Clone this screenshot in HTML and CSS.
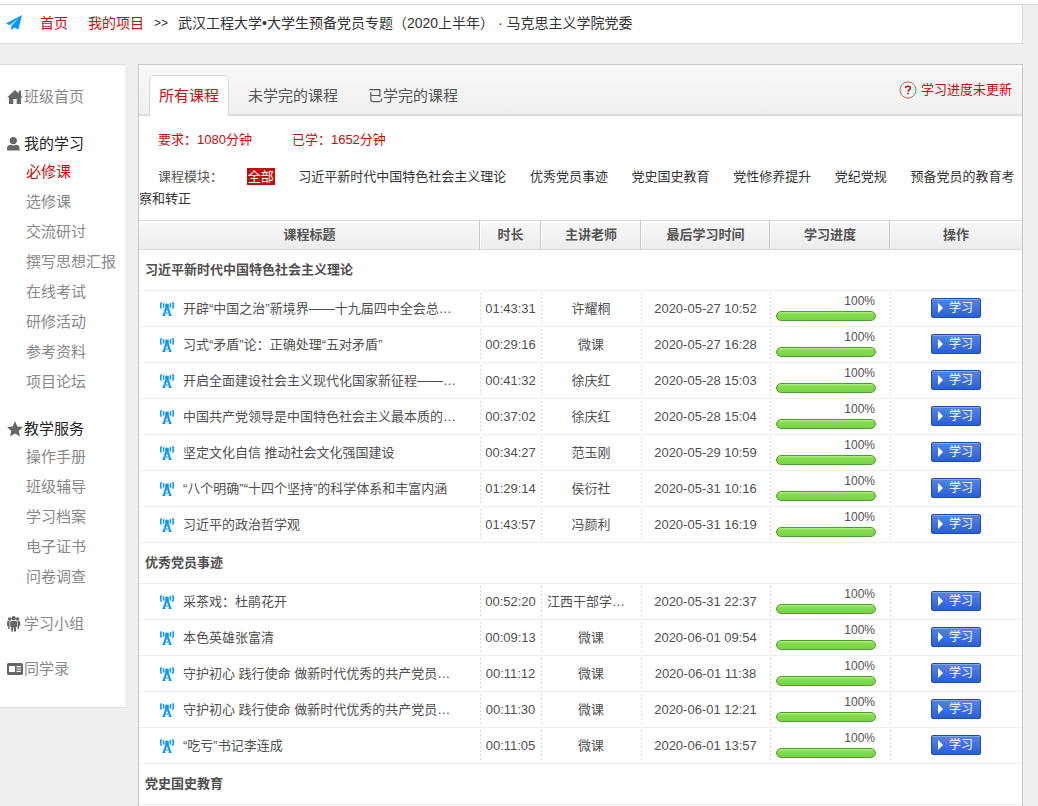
FILE: index.html
```html
<!DOCTYPE html>
<html lang="zh-CN">
<head>
    <meta charset="UTF-8">
    <meta name="viewport" content="width=device-width, initial-scale=1.0">
    <title>必修课</title>
    <link rel="stylesheet" href="styles.css">
</head>
<body>
    <svg class="sprite" aria-hidden="true">
        <symbol id="icon-tower" viewBox="0 0 14 14">
            <g fill="none" stroke="currentColor">
                <path d="M1.5 .3Q-.3 3.4 1.5 6.7M12.5 .3Q14.3 3.4 12.5 6.7" stroke-width="1.6"/>
                <path d="M4 1.2Q2.8 3.4 4 5.7M10 1.2Q11.2 3.4 10 5.7" stroke-width="1.5"/>
                <path d="M6.4 5L3.6 13.8M7.6 5L10.4 13.8" stroke-width="1.9"/>
                <path d="M5.4 8H8.6M4.4 11H9.6" stroke-width="1.2"/>
                <path d="M2.4 13.4H5.4M8.6 13.4H11.6" stroke-width="1.2"/>
            </g>
            <circle cx="7" cy="3.5" r="2" fill="currentColor"/>
        </symbol>
    </svg>

    <div class="top-line"></div>
    <div class="breadcrumb">
        <svg class="plane" viewBox="0 0 16 16" aria-hidden="true">
            <path d="M16 0L0 8.4L3.8 10.2L13 2.8L5.2 11V15.6L8 12.4L12.4 14.4Z" fill="#0a96ff"/>
        </svg>
        <a href="#">首页</a>
        <a href="#">我的项目</a>
        <span class="arrow">&gt;&gt;</span>
        <span>武汉工程大学•大学生预备党员专题（2020上半年） · 马克思主义学院党委</span>
    </div>

    <div class="layout">
        <nav class="sidebar">
            <div class="menu-section menu-home">
                <a class="menu-title" href="#">
                    <svg viewBox="0 0 16 16" aria-hidden="true"><path d="M8 1L0 8.6H2V15H6.3V10H9.7V15H14V8.6H16L14 6.7V1.5H11.8V4.6Z"/></svg>班级首页</a>
            </div>
            <div class="menu-section">
                <a class="menu-title open" href="#">
                    <svg viewBox="0 0 16 16" aria-hidden="true"><circle cx="6.3" cy="4.6" r="3.6"/><path d="M0 14.5V12.5Q0 9 4 8.8Q6.3 10.4 8.6 8.8Q12.6 9 12.6 12.5V14.5Z"/></svg>我的学习</a>
                <ul>
                    <li><a class="active" href="#">必修课</a></li>
                    <li><a href="#">选修课</a></li>
                    <li><a href="#">交流研讨</a></li>
                    <li><a href="#">撰写思想汇报</a></li>
                    <li><a href="#">在线考试</a></li>
                    <li><a href="#">研修活动</a></li>
                    <li><a href="#">参考资料</a></li>
                    <li><a href="#">项目论坛</a></li>
                </ul>
            </div>
            <div class="menu-section">
                <a class="menu-title open" href="#">
                    <svg viewBox="0 0 16 16" aria-hidden="true"><path d="M8 0L10.3 5.4L16 6L11.7 9.9L13 15.6L8 12.6L3 15.6L4.3 9.9L0 6L5.7 5.4Z"/></svg>教学服务</a>
                <ul>
                    <li><a href="#">操作手册</a></li>
                    <li><a href="#">班级辅导</a></li>
                    <li><a href="#">学习档案</a></li>
                    <li><a href="#">电子证书</a></li>
                    <li><a href="#">问卷调查</a></li>
                </ul>
            </div>
            <div class="menu-section">
                <a class="menu-title" href="#">
                    <svg viewBox="0 0 16 16" aria-hidden="true"><circle cx="2.6" cy="3" r="1.8"/><circle cx="10.6" cy="3" r="1.8"/><circle cx="6.6" cy="2.2" r="2.2"/><path d="M0 6Q0 5 1.4 5H2.6V13H1.2V10H0ZM13.2 6Q13.2 5 11.8 5H10.6V13H12V10H13.2ZM3.2 6Q3.2 5 4.8 5H8.4Q10 5 10 6V11H9V15.5H7V11.5H6.2V15.5H4.2V11H3.2Z"/></svg>学习小组</a>
            </div>
            <div class="menu-section">
                <a class="menu-title" href="#">
                    <svg viewBox="0 0 16 16" aria-hidden="true"><path fill-rule="evenodd" d="M1.5 2H14.5Q16 2 16 3.5V12.5Q16 14 14.5 14H1.5Q0 14 0 12.5V3.5Q0 2 1.5 2ZM2 5V11H8V5ZM9.5 5V6.2H14V5ZM9.5 7.4V8.6H14V7.4ZM9.5 9.8V11H14V9.8Z"/></svg>同学录</a>
            </div>
        </nav>

        <main class="content">
            <div class="tabs">
                <a class="tab current" href="#">所有课程</a>
                <a class="tab" href="#">未学完的课程</a>
                <a class="tab" href="#">已学完的课程</a>
                <a class="help" href="#">
                    <svg viewBox="0 0 18 18" aria-hidden="true"><circle cx="9" cy="9" r="8" fill="#fff" stroke="#cc5a4c"/><path d="M6.6 7.2Q6.7 5.2 9 5.2Q11.4 5.2 11.4 7Q11.4 8.1 10.2 8.9Q9.1 9.6 9.1 10.8M9.1 12V13.6" fill="none" stroke="#c30d0d" stroke-width="1.6"/></svg>学习进度未更新</a>
            </div>

            <div class="summary">
                <span>要求：1080分钟</span>
                <span>已学：1652分钟</span>
            </div>

            <div class="modules">
                <span class="label">课程模块：</span>
                <a class="selected" href="#">全部</a>
                <a href="#">习近平新时代中国特色社会主义理论</a>
                <a href="#">优秀党员事迹</a>
                <a href="#">党史国史教育</a>
                <a href="#">党性修养提升</a>
                <a href="#">党纪党规</a>
                <a href="#">预备党员的教育考察和转正</a>
            </div>

            <table class="courses">
                <colgroup>
                    <col>
                    <col class="col-length">
                    <col class="col-teacher">
                    <col class="col-time">
                    <col class="col-progress">
                    <col class="col-action">
                </colgroup>
                <thead>
                    <tr><th>课程标题</th><th>时长</th><th>主讲老师</th><th>最后学习时间</th><th>学习进度</th><th>操作</th></tr>
                </thead>
                <tbody>
                    <tr class="group"><td colspan="6">习近平新时代中国特色社会主义理论</td></tr>
                    <tr>
                        <td><a class="name" href="#"><svg><use href="#icon-tower"/></svg>开辟“中国之治”新境界——十九届四中全会总…</a></td>
                        <td>01:43:31</td><td>许耀桐</td><td>2020-05-27 10:52</td>
                        <td><div class="percent">100%</div><div class="track"><div class="bar" style="width: 100%"></div></div></td>
                        <td><button type="button">学习</button></td>
                    </tr>
                    <tr>
                        <td><a class="name" href="#"><svg><use href="#icon-tower"/></svg>习式“矛盾”论：正确处理“五对矛盾”</a></td>
                        <td>00:29:16</td><td>微课</td><td>2020-05-27 16:28</td>
                        <td><div class="percent">100%</div><div class="track"><div class="bar" style="width: 100%"></div></div></td>
                        <td><button type="button">学习</button></td>
                    </tr>
                    <tr>
                        <td><a class="name" href="#"><svg><use href="#icon-tower"/></svg>开启全面建设社会主义现代化国家新征程——…</a></td>
                        <td>00:41:32</td><td>徐庆红</td><td>2020-05-28 15:03</td>
                        <td><div class="percent">100%</div><div class="track"><div class="bar" style="width: 100%"></div></div></td>
                        <td><button type="button">学习</button></td>
                    </tr>
                    <tr>
                        <td><a class="name" href="#"><svg><use href="#icon-tower"/></svg>中国共产党领导是中国特色社会主义最本质的…</a></td>
                        <td>00:37:02</td><td>徐庆红</td><td>2020-05-28 15:04</td>
                        <td><div class="percent">100%</div><div class="track"><div class="bar" style="width: 100%"></div></div></td>
                        <td><button type="button">学习</button></td>
                    </tr>
                    <tr>
                        <td><a class="name" href="#"><svg><use href="#icon-tower"/></svg>坚定文化自信 推动社会文化强国建设</a></td>
                        <td>00:34:27</td><td>范玉刚</td><td>2020-05-29 10:59</td>
                        <td><div class="percent">100%</div><div class="track"><div class="bar" style="width: 100%"></div></div></td>
                        <td><button type="button">学习</button></td>
                    </tr>
                    <tr>
                        <td><a class="name" href="#"><svg><use href="#icon-tower"/></svg>“八个明确”“十四个坚持”的科学体系和丰富内涵</a></td>
                        <td>01:29:14</td><td>侯衍社</td><td>2020-05-31 10:16</td>
                        <td><div class="percent">100%</div><div class="track"><div class="bar" style="width: 100%"></div></div></td>
                        <td><button type="button">学习</button></td>
                    </tr>
                    <tr>
                        <td><a class="name" href="#"><svg><use href="#icon-tower"/></svg>习近平的政治哲学观</a></td>
                        <td>01:43:57</td><td>冯颜利</td><td>2020-05-31 16:19</td>
                        <td><div class="percent">100%</div><div class="track"><div class="bar" style="width: 100%"></div></div></td>
                        <td><button type="button">学习</button></td>
                    </tr>
                    <tr class="group"><td colspan="6">优秀党员事迹</td></tr>
                    <tr>
                        <td><a class="name" href="#"><svg><use href="#icon-tower"/></svg>采茶戏：杜鹃花开</a></td>
                        <td>00:52:20</td><td class="long">江西干部学…</td><td>2020-05-31 22:37</td>
                        <td><div class="percent">100%</div><div class="track"><div class="bar" style="width: 100%"></div></div></td>
                        <td><button type="button">学习</button></td>
                    </tr>
                    <tr>
                        <td><a class="name" href="#"><svg><use href="#icon-tower"/></svg>本色英雄张富清</a></td>
                        <td>00:09:13</td><td>微课</td><td>2020-06-01 09:54</td>
                        <td><div class="percent">100%</div><div class="track"><div class="bar" style="width: 100%"></div></div></td>
                        <td><button type="button">学习</button></td>
                    </tr>
                    <tr>
                        <td><a class="name" href="#"><svg><use href="#icon-tower"/></svg>守护初心 践行使命 做新时代优秀的共产党员…</a></td>
                        <td>00:11:12</td><td>微课</td><td>2020-06-01 11:38</td>
                        <td><div class="percent">100%</div><div class="track"><div class="bar" style="width: 100%"></div></div></td>
                        <td><button type="button">学习</button></td>
                    </tr>
                    <tr>
                        <td><a class="name" href="#"><svg><use href="#icon-tower"/></svg>守护初心 践行使命 做新时代优秀的共产党员…</a></td>
                        <td>00:11:30</td><td>微课</td><td>2020-06-01 12:21</td>
                        <td><div class="percent">100%</div><div class="track"><div class="bar" style="width: 100%"></div></div></td>
                        <td><button type="button">学习</button></td>
                    </tr>
                    <tr>
                        <td><a class="name" href="#"><svg><use href="#icon-tower"/></svg>“吃亏”书记李连成</a></td>
                        <td>00:11:05</td><td>微课</td><td>2020-06-01 13:57</td>
                        <td><div class="percent">100%</div><div class="track"><div class="bar" style="width: 100%"></div></div></td>
                        <td><button type="button">学习</button></td>
                    </tr>
                    <tr class="group"><td colspan="6">党史国史教育</td></tr>
                </tbody>
            </table>
        </main>
    </div>
</body>
</html>
```
FILE: styles.css
```css
* {
    box-sizing: border-box;
}
body {
    display: flex;
    flex-direction: column;
    min-height: 100vh;
    margin: 0;
    background-color: #efefef;
    color: #505050;
    font-family: "Liberation Sans", "Noto Sans CJK SC", sans-serif;
    font-size: 13px;
    line-height: 20px;
}
a {
    color: inherit;
    text-decoration: none;
}
ul {
    margin: 0;
    padding: 0;
    list-style: none;
}
.sprite {
    position: absolute;
    width: 0;
    height: 0;
}

/* breadcrumb */
.top-line {
    height: 5px;
    background-color: #fff;
    border-bottom: 1px solid #d4d4d4;
}
.breadcrumb {
    display: flex;
    align-items: center;
    height: 39px;
    margin-right: 15px;
    padding: 0 0 2px 6px;
    background-color: #fff;
    border: 1px solid #dadada;
    border-width: 0 1px 1px 0;
    color: #333;
    font-size: 14px;
}
.breadcrumb a {
    margin-right: 20px;
    color: #c30d0d;
}
.breadcrumb .plane {
    width: 16px;
    height: 16px;
    margin-right: 18px;
}
.breadcrumb .arrow {
    margin: 0 10px 0 -10px;
    font-size: 12px;
}

.layout {
    display: flex;
    flex: 1;
    align-items: flex-start;
    margin: 20px 15px 0 0;
}

/* left menu */
.sidebar {
    flex: none;
    width: 125px;
    margin-right: 13px;
    padding: 19px 0 6px 7px;
    background-color: #fff;
    border: 1px solid #dadada;
    border-width: 1px 0;
    color: #888;
    font-size: 15px;
}
.menu-section {
    margin-bottom: 19px;
}
.menu-home {
    margin-bottom: 21px;
}
.menu-title {
    display: flex;
    align-items: center;
    height: 26px;
}
.menu-title svg {
    width: 16px;
    height: 16px;
    margin-right: 1px;
    fill: #666;
}
.menu-title.open {
    color: #222;
}
.sidebar li {
    padding-left: 19px;
    line-height: 30px;
}
.sidebar .active {
    color: #c30d0d;
}

/* course list */
.content {
    flex: 1;
    align-self: stretch;
    min-width: 0;
    background-color: #fff;
    border: 1px solid #c8c8c8;
    border-bottom: 0;
}
.tabs {
    display: flex;
    align-items: flex-end;
    height: 51px;
    padding: 0 10px;
    background: linear-gradient(#fff 3px, #f8f8f8 3px, #f0f0f0);
    border-bottom: 2px solid #dadada;
    color: #555;
    font-size: 15px;
}
.tab {
    margin-bottom: -2px;
    padding: 0 10px;
    border: 1px solid transparent;
    border-bottom: 0;
    line-height: 40px;
}
.tab + .tab {
    margin-left: 8px;
}
.tab.current {
    padding: 0 9px;
    background-color: #fff;
    border-color: #dadada;
    border-radius: 5px 5px 0 0;
    color: #c30d0d;
}
.help {
    display: flex;
    align-items: center;
    align-self: center;
    margin-left: auto;
    color: #c30d0d;
    font-size: 13px;
}
.help svg {
    width: 18px;
    height: 18px;
    margin-right: 4px;
}
.summary {
    display: flex;
    gap: 40px;
    padding: 14px 19px 0;
    color: #c30d0d;
}
.modules {
    padding: 16px 0 10px;
    color: #333;
    line-height: 22px;
}
.modules .label {
    margin-left: 19px;
    color: #555;
}
.modules a {
    margin-left: 20px;
}
.modules .selected {
    padding: 1px;
    background-color: #c30d0d;
    color: #fff;
}
.courses {
    width: 100%;
    border-spacing: 0;
    table-layout: fixed;
}
.col-length {
    width: 61px;
}
.col-teacher {
    width: 100px;
}
.col-time {
    width: 129px;
}
.col-progress {
    width: 120px;
}
.col-action {
    width: 132px;
}
.courses th {
    height: 30px;
    padding: 0;
    background: linear-gradient(#fff 2px, #f7f7f7 2px, #ececec);
    border: 1px solid #dadada;
    border-width: 1px 0;
    color: #555;
}
.courses th + th {
    box-shadow: -1px 0 #c8c8c8, inset 1px 0 #fff;
}
.courses td {
    height: 36px;
    padding: 0;
    border-bottom: 1px solid #eee;
    text-align: center;
    white-space: nowrap;
}
.courses td + td {
    background: repeating-linear-gradient(#d8d8d8 0 2px, transparent 2px 4px) 0 2px / 1px 32px no-repeat;
}
.courses .group td {
    height: 41px;
    padding-left: 6px;
    font-weight: bold;
    text-align: left;
}
.courses .long {
    padding-left: 6px;
    text-align: left;
}
.name {
    display: flex;
    align-items: center;
    padding-left: 21px;
}
.name svg {
    width: 14px;
    height: 14px;
    margin-right: 9px;
    color: #0a96ff;
}
.percent {
    width: 105px;
    font-size: 12px;
    line-height: 14px;
    text-align: right;
}
.track {
    width: 100px;
    height: 10px;
    margin: 3px 0 3px 6px;
}
.bar {
    height: 10px;
    background: linear-gradient(#a8eb78 1px, #86dc50 2px, #7bd244);
    border: 1px solid #4aa02c;
    border-radius: 5px;
}
.courses button {
    display: flex;
    align-items: center;
    width: 50px;
    height: 20px;
    margin: 0 auto 2px;
    padding: 0 6px;
    background: linear-gradient(#5585e0, #2a5fd4);
    border: 1px solid #1d4bae;
    border-radius: 2px;
    box-shadow: inset 0 1px #86a9ec;
    color: #fff;
    font-family: inherit;
    font-size: 12px;
    line-height: 18px;
}
.courses button::before {
    content: "";
    margin-right: 6px;
    border: 5px solid transparent;
    border-left-color: #fff;
    border-right-width: 0;
}
```
